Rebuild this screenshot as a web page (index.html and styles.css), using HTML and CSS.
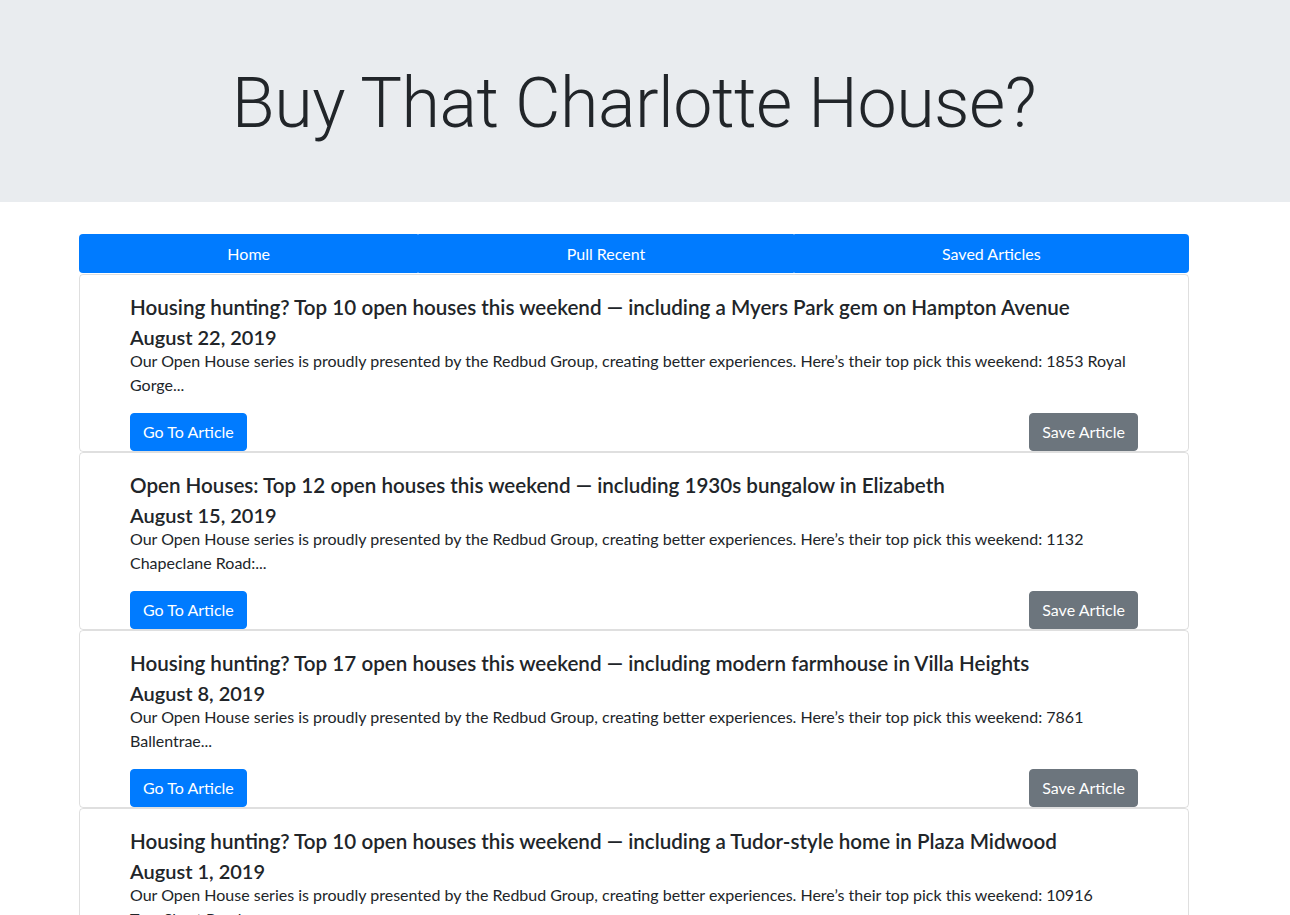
FILE: index.html
```html
<!DOCTYPE html>
<html lang="en">
<head>
<meta charset="utf-8">
<title>Buy That Charlotte House?</title>
<link rel="stylesheet" href="styles.css">
</head>
<body>
<header class="hero">
  <div class="container">
    <h1 class="hero-title">Buy That Charlotte House?</h1>
  </div>
</header>
<main class="container">
  <nav class="tabs">
    <a class="tab" href="#">Home</a>
    <a class="tab" href="#">Pull Recent</a>
    <a class="tab" href="#">Saved Articles</a>
  </nav>
  <section class="articles">
    <article class="card">
      <div class="card-body">
        <h5 class="card-title">Housing hunting? Top 10 open houses this weekend — including a Myers Park gem on Hampton Avenue</h5>
        <h5 class="card-date">August 22, 2019</h5>
        <p class="card-text">Our Open House series is proudly presented by the Redbud Group, creating better experiences. Here’s their top pick this weekend: 1853 Royal Gorge...</p>
        <div class="card-actions">
          <a class="btn btn-primary" href="#">Go To Article</a>
          <button class="btn btn-secondary" type="button">Save Article</button>
        </div>
      </div>
    </article>
    <article class="card">
      <div class="card-body">
        <h5 class="card-title">Open Houses: Top 12 open houses this weekend — including 1930s bungalow in Elizabeth</h5>
        <h5 class="card-date">August 15, 2019</h5>
        <p class="card-text">Our Open House series is proudly presented by the Redbud Group, creating better experiences. Here’s their top pick this weekend: 1132 Chapeclane Road:...</p>
        <div class="card-actions">
          <a class="btn btn-primary" href="#">Go To Article</a>
          <button class="btn btn-secondary" type="button">Save Article</button>
        </div>
      </div>
    </article>
    <article class="card">
      <div class="card-body">
        <h5 class="card-title">Housing hunting? Top 17 open houses this weekend — including modern farmhouse in Villa Heights</h5>
        <h5 class="card-date">August 8, 2019</h5>
        <p class="card-text">Our Open House series is proudly presented by the Redbud Group, creating better experiences. Here’s their top pick this weekend: 7861 Ballentrae...</p>
        <div class="card-actions">
          <a class="btn btn-primary" href="#">Go To Article</a>
          <button class="btn btn-secondary" type="button">Save Article</button>
        </div>
      </div>
    </article>
    <article class="card">
      <div class="card-body">
        <h5 class="card-title">Housing hunting? Top 10 open houses this weekend — including a Tudor-style home in Plaza Midwood</h5>
        <h5 class="card-date">August 1, 2019</h5>
        <p class="card-text card-text-long">Our Open House series is proudly presented by the Redbud Group, creating better experiences. Here’s their top pick this weekend: 10916 Tom Short Road...</p>
        <div class="card-actions">
          <a class="btn btn-primary" href="#">Go To Article</a>
          <button class="btn btn-secondary" type="button">Save Article</button>
        </div>
      </div>
    </article>
  </section>
</main>
</body>
</html>
```
FILE: styles.css
```css
* { box-sizing: border-box; }
html, body { margin: 0; padding: 0; }
body {
  font-family: "Lato", "Liberation Sans", sans-serif;
  font-size: 16px;
  line-height: 1.5;
  color: #212529;
  background: #fff;
}
.container {
  width: 1110px;
  margin-left: 79px;
}
.hero {
  background: #e9ecef;
  padding: 61px 0 57px;
  margin-bottom: 32px;
}
.hero-title {
  margin: 0;
  font-family: "Roboto", "Liberation Sans", sans-serif;
  font-weight: 300;
  font-size: 70px;
  letter-spacing: -0.5px;
  line-height: 84px;
  text-align: center;
  color: #212529;
}
.tabs {
  display: flex;
  height: 39px;
  margin-bottom: 1px;
}
.tab {
  flex: 1 1 auto;
  display: flex;
  align-items: center;
  justify-content: center;
  padding: 0 12px;
  background: #007bff;
  color: #fff;
  text-decoration: none;
  font-size: 16px;
  border-radius: 1px;
}
.tab:first-child { border-radius: 4px 1px 1px 4px; }
.tab:last-child { border-radius: 1px 4px 4px 1px; }
.card {
  border: 1px solid rgba(0,0,0,.125);
  border-radius: 4px;
}
.card-body {
  padding: 20px 50px 0;
}
.card-title, .card-date {
  margin: 0;
  font-size: 20px;
  font-weight: 600;
  line-height: 24px;
}
.card-title { font-size: 20.6px; }
.card-date { margin-top: 6px; }
.card-text {
  margin: 0 0 16px;
  font-size: 16px;
  line-height: 24px;
}
.card-text-long { padding-right: 30px; }
.card-actions {
  display: flex;
  justify-content: space-between;
}
.btn {
  display: inline-block;
  height: 38px;
  padding: 6px 12px;
  border: 1px solid transparent;
  border-radius: 4px;
  font-family: inherit;
  font-size: 16px;
  line-height: 24px;
  color: #fff;
  text-decoration: none;
  cursor: pointer;
}
.btn-primary { background: #007bff; border-color: #007bff; }
.btn-secondary { background: #6c757d; border-color: #6c757d; }
```
